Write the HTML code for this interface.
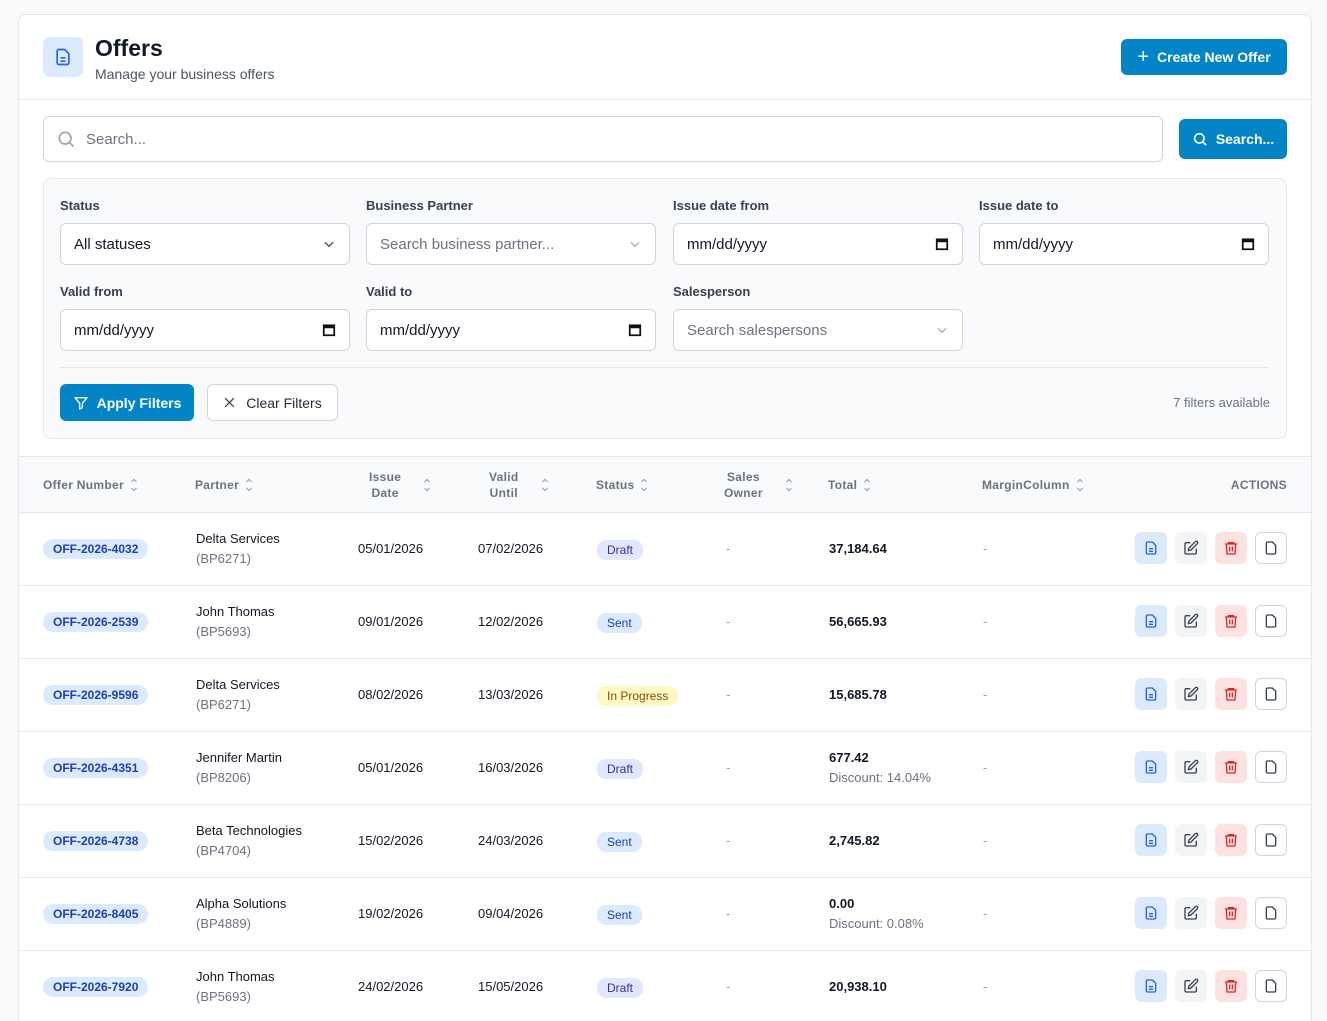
<!DOCTYPE html>
<html style="width:1327px;height:1021px;overflow:hidden"><head><meta charset="utf-8"><style>
*{box-sizing:border-box;margin:0;padding:0}
body{width:1327px;height:1021px;overflow:hidden;background:#f8f9fb;font-family:"Liberation Sans",sans-serif;color:#111827;position:relative}
.a{position:absolute}
.card{left:18px;top:14px;width:1294px;height:1007px;background:#fff;border:1px solid #e5e7eb;border-bottom:none;border-radius:8px 8px 0 0;overflow:hidden}
.btn{position:absolute;background:#0284c7;color:#fff;border-radius:6px;font-size:14px;font-weight:bold;display:flex;align-items:center;justify-content:center;gap:8px}
.lbl{position:absolute;font-size:13px;font-weight:bold;color:#374151}
.inp{position:absolute;height:42px;background:#fff;border:1px solid #d1d5db;border-radius:6px;font-size:15px;display:flex;align-items:center;padding:0 13px;justify-content:space-between}
.ph{color:#6b7280}
.th{position:absolute;height:56px;font-size:12px;font-weight:bold;color:#6b7280;display:flex;align-items:center;gap:6px;letter-spacing:.3px}
.sort{display:inline-block;width:8px;height:16px}
.row{position:absolute;left:0;width:1294px;height:73px;border-top:1px solid #e5e7eb}
.c{position:absolute;font-size:13px;color:#111827}
.pill{position:absolute;left:24px;background:#dbeafe;color:#1e40af;font-size:12px;font-weight:bold;border-radius:10px;padding:3px 10px;line-height:14px}
.st{position:absolute;left:578px;font-size:12px;border-radius:9px;padding:3px 10px;line-height:14px}
.ab{position:absolute;width:32px;height:32px;border-radius:6px;display:flex;align-items:center;justify-content:center}
</style></head><body>
<div class="a card">
 <div class="a" style="left:24px;top:22px;width:40px;height:40px;background:#dbeafe;border-radius:7px;display:flex;align-items:center;justify-content:center">
  <svg width="20" height="20" viewBox="0 0 24 24" fill="none" stroke="#2563eb" stroke-width="2" stroke-linejoin="round"><path d="M14 3H7a2 2 0 0 0-2 2v14a2 2 0 0 0 2 2h10a2 2 0 0 0 2-2V8z"/><path d="M9 13h6M9 17h6"/></svg>
 </div>
 <div class="a" style="left:76px;top:20px;font-size:23px;font-weight:bold;color:#111827">Offers</div>
 <div class="a" style="left:76px;top:51px;font-size:14px;color:#4b5563">Manage your business offers</div>
 <div class="btn" style="left:1102px;top:24px;width:166px;height:36px"><span style="font-size:20px;font-weight:normal">+</span>Create New Offer</div>
 <div class="a" style="left:0;top:84px;width:1294px;height:1px;background:#e5e7eb"></div>
 <div class="inp" style="left:24px;top:101px;width:1120px;height:46px;justify-content:flex-start;gap:10px;padding-left:12px">
  <svg width="20" height="20" viewBox="0 0 24 24" fill="none" stroke="#9ca3af" stroke-width="2"><circle cx="11" cy="11" r="7"/><path d="M16 16l5 5"/></svg><span class="ph">Search...</span></div>
 <div class="btn" style="left:1160px;top:104px;width:108px;height:40px"><svg width="16" height="16" viewBox="0 0 24 24" fill="none" stroke="#fff" stroke-width="2.4"><circle cx="11" cy="11" r="7"/><path d="M16 16l5 5"/></svg>Search...</div>

 <div class="a" style="left:24px;top:163px;width:1244px;height:261px;background:#f9fafb;border:1px solid #e5e7eb;border-radius:8px">
  <div class="lbl" style="left:16px;top:19px">Status</div>
  <div class="lbl" style="left:322px;top:19px">Business Partner</div>
  <div class="lbl" style="left:629px;top:19px">Issue date from</div>
  <div class="lbl" style="left:935px;top:19px">Issue date to</div>
  <div class="inp" style="left:16px;top:44px;width:290px"><span>All statuses</span><svg width="14" height="14" viewBox="0 0 24 24" fill="none" stroke="#4b5563" stroke-width="2.5"><path d="M5 9l7 7 7-7"/></svg></div>
  <div class="inp" style="left:322px;top:44px;width:290px"><span class="ph">Search business partner...</span><svg width="14" height="14" viewBox="0 0 24 24" fill="none" stroke="#9ca3af" stroke-width="2"><path d="M5 9l7 7 7-7"/></svg></div>
  <div class="inp" style="left:629px;top:44px;width:290px"><span>mm/dd/yyyy</span><svg width="14" height="14" viewBox="0 0 24 24"><rect x="3" y="4" width="18" height="17" fill="none" stroke="#111" stroke-width="3"/><rect x="3" y="4" width="18" height="5" fill="#111"/></svg></div>
  <div class="inp" style="left:935px;top:44px;width:290px"><span>mm/dd/yyyy</span><svg width="14" height="14" viewBox="0 0 24 24"><rect x="3" y="4" width="18" height="17" fill="none" stroke="#111" stroke-width="3"/><rect x="3" y="4" width="18" height="5" fill="#111"/></svg></div>
  <div class="lbl" style="left:16px;top:105px">Valid from</div>
  <div class="lbl" style="left:322px;top:105px">Valid to</div>
  <div class="lbl" style="left:629px;top:105px">Salesperson</div>
  <div class="inp" style="left:16px;top:130px;width:290px"><span>mm/dd/yyyy</span><svg width="14" height="14" viewBox="0 0 24 24"><rect x="3" y="4" width="18" height="17" fill="none" stroke="#111" stroke-width="3"/><rect x="3" y="4" width="18" height="5" fill="#111"/></svg></div>
  <div class="inp" style="left:322px;top:130px;width:290px"><span>mm/dd/yyyy</span><svg width="14" height="14" viewBox="0 0 24 24"><rect x="3" y="4" width="18" height="17" fill="none" stroke="#111" stroke-width="3"/><rect x="3" y="4" width="18" height="5" fill="#111"/></svg></div>
  <div class="inp" style="left:629px;top:130px;width:290px"><span class="ph">Search salespersons</span><svg width="14" height="14" viewBox="0 0 24 24" fill="none" stroke="#9ca3af" stroke-width="2"><path d="M5 9l7 7 7-7"/></svg></div>
  <div class="a" style="left:16px;top:188px;width:1209px;height:1px;background:#e5e7eb"></div>
  <div class="btn" style="left:16px;top:205px;width:134px;height:37px"><svg width="16" height="16" viewBox="0 0 24 24" fill="none" stroke="#fff" stroke-width="2" stroke-linejoin="round"><path d="M3 4h18l-7 8.5V19l-4 2v-8.5z"/></svg>Apply Filters</div>
  <div class="a" style="left:163px;top:205px;width:131px;height:37px;background:#fff;border:1px solid #d1d5db;border-radius:6px;display:flex;align-items:center;justify-content:center;gap:10px;font-size:14px;color:#1f2937"><svg width="13" height="13" viewBox="0 0 24 24" stroke="#374151" stroke-width="2.4"><path d="M4 4l16 16M20 4L4 20"/></svg>Clear Filters</div>
  <div class="a" style="right:16px;top:216px;font-size:13px;color:#6b7280">7 filters available</div>
 </div>

 <div class="a" style="left:0;top:441px;width:1294px;height:56px;background:#f9fafb;border-top:1px solid #e5e7eb"></div>
 <div id="hd"></div>
 <div id="rows"></div>
</div>
<script>
const sort='<svg class="sort" viewBox="0 0 8 16" fill="none" stroke="#9ca3af" stroke-width="1.2"><path d="M1.5 5L4 2.5 6.5 5M1.5 11L4 13.5 6.5 11"/></svg>';
const H=[[24,'Offer Number'],[176,'Partner'],[350,'Issue<br>Date'],[470,'Valid<br>Until'],[577,'Status'],[705,'Sales<br>Owner'],[809,'Total'],[963,'MarginColumn']];
let h='';H.forEach(([x,t])=>{h+=`<div class="th" style="left:${x}px;top:442px;text-align:center;line-height:16px"><span>${t}</span>${t.includes('<br>')?'<span style="width:10px"></span>':''}${sort}</div>`});
h+='<div class="th" style="right:24px;top:442px">ACTIONS</div>';
document.getElementById('hd').outerHTML=h;
const R=[['OFF-2026-4032','Delta Services','BP6271','05/01/2026','07/02/2026','Draft','37,184.64',''],
['OFF-2026-2539','John Thomas','BP5693','09/01/2026','12/02/2026','Sent','56,665.93',''],
['OFF-2026-9596','Delta Services','BP6271','08/02/2026','13/03/2026','In Progress','15,685.78',''],
['OFF-2026-4351','Jennifer Martin','BP8206','05/01/2026','16/03/2026','Draft','677.42','Discount: 14.04%'],
['OFF-2026-4738','Beta Technologies','BP4704','15/02/2026','24/03/2026','Sent','2,745.82',''],
['OFF-2026-8405','Alpha Solutions','BP4889','19/02/2026','09/04/2026','Sent','0.00','Discount: 0.08%'],
['OFF-2026-7920','John Thomas','BP5693','24/02/2026','15/05/2026','Draft','20,938.10','']];
const sc={Draft:['#e0e7ff','#3730a3'],Sent:['#dbeafe','#1e40af'],'In Progress':['#fef9c3','#854d0e']};
let r='';R.forEach((d,i)=>{const y=497+i*73;const c=sc[d[5]];
r+=`<div class="row" style="top:${y}px">
<div class="pill" style="top:26px">${d[0]}</div>
<div class="c" style="left:177px;top:16px;line-height:20px">${d[1]}<br><span style="color:#6b7280">(${d[2]})</span></div>
<div class="c" style="left:339px;top:28px">${d[3]}</div>
<div class="c" style="left:459px;top:28px">${d[4]}</div>
<div class="st" style="top:27px;background:${c[0]};color:${c[1]}">${d[5]}</div>
<div class="c" style="left:707px;top:28px;color:#9ca3af">-</div>
<div class="c" style="left:810px;top:${d[7]?16:26}px;line-height:20px"><b>${d[6]}</b>${d[7]?'<br><span style="color:#6b7280">'+d[7]+'</span>':''}</div>
<div class="c" style="left:964px;top:28px;color:#9ca3af">-</div>
<div class="ab" style="left:1116px;top:19px;background:#dbeafe"><svg width="16" height="16" viewBox="0 0 24 24" fill="none" stroke="#2563eb" stroke-width="2" stroke-linejoin="round"><path d="M14 3H7a2 2 0 0 0-2 2v14a2 2 0 0 0 2 2h10a2 2 0 0 0 2-2V8z"/><path d="M9 13h6M9 17h6"/></svg></div>
<div class="ab" style="left:1156px;top:19px;background:#f3f4f6"><svg width="16" height="16" viewBox="0 0 24 24" fill="none" stroke="#374151" stroke-width="2" stroke-linejoin="round"><path d="M11 4H5a2 2 0 0 0-2 2v13a2 2 0 0 0 2 2h13a2 2 0 0 0 2-2v-6"/><path d="M18.5 2.5a2.1 2.1 0 0 1 3 3L12 15l-4 1 1-4z"/></svg></div>
<div class="ab" style="left:1196px;top:19px;background:#fee2e2"><svg width="16" height="16" viewBox="0 0 24 24" fill="none" stroke="#dc2626" stroke-width="2" stroke-linejoin="round"><path d="M3 6h18M8 6V4h8v2M5 6l1 15h12l1-15M10 10v7M14 10v7"/></svg></div>
<div class="ab" style="left:1236px;top:19px;background:#fff;border:1px solid #d1d5db"><svg width="16" height="16" viewBox="0 0 24 24" fill="none" stroke="#374151" stroke-width="2" stroke-linejoin="round"><path d="M14 3H7a2 2 0 0 0-2 2v14a2 2 0 0 0 2 2h10a2 2 0 0 0 2-2V8z"/></svg></div>
</div>`});
document.getElementById('rows').outerHTML=r;
</script>
</body></html>
